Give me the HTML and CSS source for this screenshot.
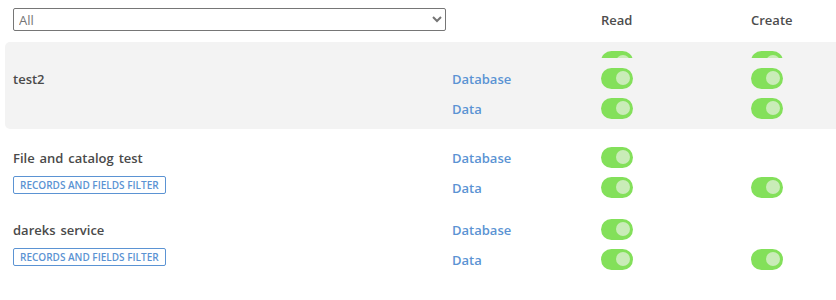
FILE: index.html
```html
<!DOCTYPE html>
<html>
<head>
<meta charset="utf-8">
<link rel="stylesheet" href="styles.css">
</head>
<body>
<div class="page">
  <div class="header grid">
    <div class="c1"><select class="filter"><option>All</option></select></div>
    <div class="c2"></div>
    <div class="c3 head">Read</div>
    <div class="c4 head">Create</div>
  </div>

  <div class="panel">
    <div class="clip grid">
      <div></div><div></div>
      <div><span class="toggle"></span></div>
      <div><span class="toggle"></span></div>
    </div>
    <div class="group grid">
      <div class="name r1">test2</div>
      <div class="type r1">Database</div>
      <div class="cell r1 c3"><span class="toggle"></span></div>
      <div class="cell r1 c4"><span class="toggle"></span></div>
      <div class="type r2">Data</div>
      <div class="cell r2 c3"><span class="toggle"></span></div>
      <div class="cell r2 c4"><span class="toggle"></span></div>
    </div>
  </div>

  <div class="group grid plain">
    <div class="name r1">File and catalog test</div>
    <div class="r2 c1 btncell"><span class="filter-btn">RECORDS AND FIELDS FILTER</span></div>
    <div class="type r1">Database</div>
    <div class="cell r1 c3"><span class="toggle"></span></div>
    <div class="type r2">Data</div>
    <div class="cell r2 c3"><span class="toggle"></span></div>
    <div class="cell r2 c4"><span class="toggle"></span></div>
  </div>

  <div class="group grid plain second">
    <div class="name r1">dareks service</div>
    <div class="r2 c1 btncell"><span class="filter-btn">RECORDS AND FIELDS FILTER</span></div>
    <div class="type r1">Database</div>
    <div class="cell r1 c3"><span class="toggle"></span></div>
    <div class="type r2">Data</div>
    <div class="cell r2 c3"><span class="toggle"></span></div>
    <div class="cell r2 c4"><span class="toggle"></span></div>
  </div>
</div>
</body>
</html>
```

FILE: styles.css
```css
html, body {
  margin: 0;
  padding: 0;
  background: #ffffff;
}
body {
  font-family: "Open Sans", "Noto Sans", sans-serif;
  font-size: 13px;
  color: #4a4a4a;
  overflow: hidden;
}
.page {
  width: 836px;
}
.grid {
  display: grid;
  grid-template-columns: 439px 149px 150px 1fr;
  align-items: center;
}
.header {
  padding-left: 13px;
  padding-top: 8px;
  height: 34px;
  align-items: start;
}
.filter {
  display: block;
  width: 433px;
  height: 23px;
  margin: 0;
  border: 1px solid #767676;
  border-radius: 2px;
  background: #fff;
  color: #757575;
  font-family: "Open Sans", "Noto Sans", sans-serif;
  font-size: 13px;
  padding: 0 1px;
}
.head {
  font-weight: 600;
  color: #4d4d4d;
  font-size: 13px;
  line-height: 23px;
  padding-top: 1px;
}
.panel {
  margin-left: 5px;
  background: #f3f3f3;
  border-radius: 5px 0 0 5px;
  padding: 9px 0 6px 8px;
  height: 72px;
}
.clip {
  height: 7px;
  overflow: hidden;
  align-items: start;
  margin-bottom: 5px;
}
.clip .toggle {
  vertical-align: top;
}
.group {
  grid-template-rows: 30px 30px;
}
.plain {
  padding-left: 13px;
  margin-top: 13px;
}
.plain.second {
  margin-top: 12px;
}
.r1 { grid-row: 1; }
.r2 { grid-row: 2; }
.c1 { grid-column: 1; }
.c3 { grid-column: 3; }
.c4 { grid-column: 4; }
.name {
  grid-column: 1;
  font-weight: 600;
  color: #4a4a4a;
  padding-top: 1px;
}
.plain .name {
  word-spacing: 1.5px;
}
.type {
  grid-column: 2;
  font-weight: 600;
  color: #5b93d3;
  padding-top: 1px;
}
.cell {
  display: flex;
  align-items: center;
}
.toggle {
  display: inline-block;
  position: relative;
  width: 32px;
  height: 21px;
  border-radius: 11px;
  background: #83e05a;
}
.toggle::after {
  content: "";
  position: absolute;
  right: 3px;
  top: 3.5px;
  width: 14px;
  height: 14px;
  border-radius: 50%;
  background: #c9ecb8;
}
.btncell {
  align-self: start;
  padding-top: 3px;
}
.filter-btn {
  display: inline-block;
  box-sizing: border-box;
  height: 18px;
  line-height: 16px;
  padding: 0 6px;
  border: 1px solid #5b93d3;
  border-radius: 2px;
  color: #5b93d3;
  font-size: 10px;
  font-weight: 600;
}
```
